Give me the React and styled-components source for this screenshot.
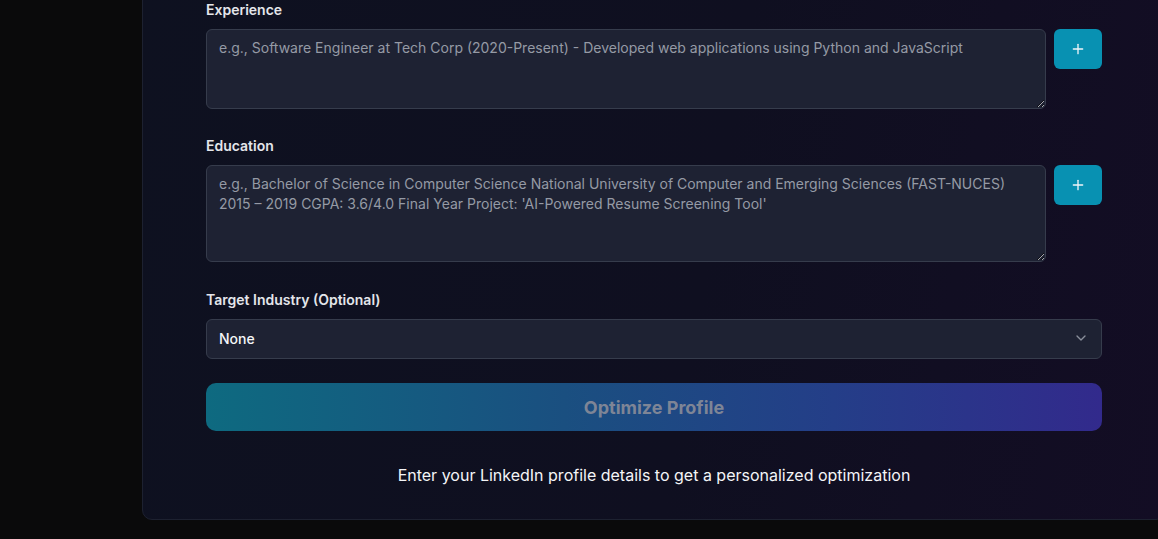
import React, { useState } from "react";
import styled, { createGlobalStyle } from "styled-components";
import { Plus, ChevronDown } from "lucide-react";

const GlobalStyle = createGlobalStyle`
  html, body {
    margin: 0;
    padding: 0;
    background: #0a0a0b;
    font-family: Inter, "Noto Sans", "Liberation Sans", sans-serif;
    overflow: hidden;
  }
  * { box-sizing: border-box; }
`;

const Page = styled.div`
  height: 539px;
  overflow: hidden;
`;

const Card = styled.section`
  width: 1024px;
  margin: -42px 0 0 142px;
  padding: 41px 63px 32px;
  border: 1px solid #1d2130;
  border-radius: 10px;
  background: linear-gradient(100deg, #0e1120 0%, #0f0f20 55%, #130d24 100%);
  display: flex;
  flex-direction: column;
`;

const Field = styled.div`
  display: flex;
  flex-direction: column;
  margin-bottom: ${({ $gap }) => $gap ?? 27}px;
`;

const Label = styled.label`
  font-size: 14px;
  line-height: 20px;
  font-weight: 600;
  color: #e4e6eb;
  margin-bottom: 9px;
`;

const Row = styled.div`
  display: flex;
  gap: 8px;
  align-items: flex-start;
`;

const TextArea = styled.textarea`
  flex: 1;
  height: ${({ $h }) => $h}px;
  padding: 8px 12px;
  border: 1px solid #363c4c;
  border-radius: 6px;
  background: #1e2233;
  color: #e5e7eb;
  font-family: inherit;
  font-size: 14px;
  line-height: 20px;
  resize: vertical;
  outline: none;

  &::placeholder {
    color: #959aa5;
  }
`;

const AddButton = styled.button`
  width: 48px;
  height: 40px;
  flex-shrink: 0;
  border: none;
  border-radius: 6px;
  background: #0891b2;
  color: #f1f5f9;
  display: flex;
  align-items: center;
  justify-content: center;
  cursor: pointer;
`;

const SelectBox = styled.button`
  height: 40px;
  width: 100%;
  padding: 0 12px 2px;
  border: 1px solid #363c4c;
  border-radius: 6px;
  background: #1e2233;
  color: #f4f5f7;
  font-family: inherit;
  font-size: 14px;
  font-weight: 500;
  display: flex;
  align-items: center;
  justify-content: space-between;
  cursor: pointer;
`;

const SubmitButton = styled.button`
  height: 48px;
  width: 100%;
  border: none;
  border-radius: 10px;
  background: linear-gradient(90deg, #0e6a80 0%, #1a4f80 40%, #243e88 70%, #322a8c 100%);
  color: #7e8596;
  font-family: inherit;
  font-size: 18px;
  font-weight: 700;
  cursor: not-allowed;
`;

const Hint = styled.p`
  margin: 32px 0 0;
  text-align: center;
  color: #f4f5f7;
  font-size: 16px;
  line-height: 24px;
  font-weight: 400;
`;

export default function App() {
  const [experience, setExperience] = useState("");
  const [education, setEducation] = useState("");

  return (
    <Page>
      <GlobalStyle />
      <Card>
        <Field>
          <Label>Experience</Label>
          <Row>
            <TextArea
              $h={80}
              value={experience}
              onChange={(e) => setExperience(e.target.value)}
              placeholder="e.g., Software Engineer at Tech Corp (2020-Present) - Developed web applications using Python and JavaScript"
            />
            <AddButton aria-label="Add experience">
              <Plus size={16} strokeWidth={2} />
            </AddButton>
          </Row>
        </Field>

        <Field $gap={28}>
          <Label>Education</Label>
          <Row>
            <TextArea
              $h={97}
              value={education}
              onChange={(e) => setEducation(e.target.value)}
              placeholder="e.g., Bachelor of Science in Computer Science National University of Computer and Emerging Sciences (FAST-NUCES) 2015 – 2019 CGPA: 3.6/4.0 Final Year Project: 'AI-Powered Resume Screening Tool'"
            />
            <AddButton aria-label="Add education">
              <Plus size={16} strokeWidth={2} />
            </AddButton>
          </Row>
        </Field>

        <Field $gap={24}>
          <Label>Target Industry (Optional)</Label>
          <SelectBox>
            <span>None</span>
            <ChevronDown size={16} color="#8a8f9b" strokeWidth={2} />
          </SelectBox>
        </Field>

        <SubmitButton disabled>Optimize Profile</SubmitButton>

        <Hint>Enter your LinkedIn profile details to get a personalized optimization</Hint>
      </Card>
    </Page>
  );
}
